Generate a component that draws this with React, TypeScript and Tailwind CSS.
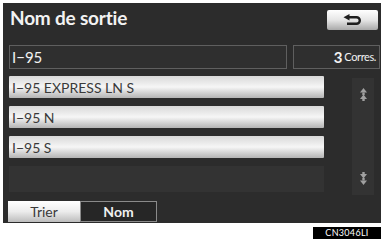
import React from 'react';

const rows = ['I−95 EXPRESS LN S', 'I−95 N', 'I−95 S'];

const BackIcon = () => (
  <svg width="22" height="13" viewBox="0 0 22 13" fill="none">
    <path d="M7 3.2h7.5a3.3 3.3 0 0 1 0 6.6H5" stroke="#1e1e1e" strokeWidth="2.4" />
    <path d="M1.5 3.2 7.5 0v6.4z" fill="#1e1e1e" />
  </svg>
);

const ArrowUp = () => (
  <svg width="7" height="13" viewBox="0 0 7 13">
    <path d="M3.5 0 7 4.5H0z" fill="#a0a0a0" />
    <rect x="2.3" y="4.5" width="2.4" height="2.5" fill="#a0a0a0" />
    <path d="M3.5 6.5 7 11H0z" fill="#a0a0a0" />
    <rect x="2.3" y="11" width="2.4" height="2" fill="#a0a0a0" />
  </svg>
);

const ArrowDown = () => (
  <svg width="7" height="13" viewBox="0 0 7 13">
    <rect x="2.3" y="0" width="2.4" height="2" fill="#a0a0a0" />
    <path d="M3.5 6.5 7 2H0z" fill="#a0a0a0" />
    <rect x="2.3" y="6" width="2.4" height="2.5" fill="#a0a0a0" />
    <path d="M3.5 13 7 8.5H0z" fill="#a0a0a0" />
  </svg>
);

export default function App() {
  return (
    <div className="w-[381px] h-[239px] bg-white overflow-hidden" style={{ fontFamily: 'Lato, "Open Sans", sans-serif' }}>
      <div className="mt-[3px] ml-[3px] w-[378px] h-[220px] bg-[#2c2c2c] flex flex-col">
        {/* Header */}
        <div className="flex items-start justify-between pt-[4px] pl-[7px] pr-[3px] h-[42px]">
          <div className="text-[19px] leading-[22px] font-bold text-[#f2f2f2] tracking-[-0.2px]">Nom de sortie</div>
          <div className="mt-[3px] w-[51px] h-[20px] rounded-[2px] bg-gradient-to-b from-[#ffffff] via-[#e6e6e6] to-[#a9a9a9] flex items-center justify-center">
            <BackIcon />
          </div>
        </div>

        {/* Search row */}
        <div className="flex pl-[6px] pr-[1px] gap-[6px] h-[24px]">
          <div className="w-[278px] border border-[#5f5f5f] bg-[#2f2f2f] flex items-center pl-[2px] text-[15px] text-[#f2f2f2]">I−95</div>
          <div className="flex-1 border border-[#5f5f5f] bg-[#2f2f2f] flex items-center justify-end pr-[3px] text-[#f2f2f2]">
            <span className="text-[15px] font-bold">3</span>
            <span className="text-[11px] ml-[2px] tracking-[-0.4px]">Corres.</span>
          </div>
        </div>

        {/* List */}
        <div className="flex mt-[7px] pl-[6px]">
          <div className="w-[315px] flex flex-col gap-[8px]">
            {rows.map((r) => (
              <div key={r} className="h-[22px] rounded-[1px] bg-gradient-to-b from-[#d8d8d8] via-[#f6f6f6] to-[#b4b4b4] flex items-center pl-[3px] text-[14px] text-[#3a3a3a]">
                {r}
              </div>
            ))}
            <div className="h-[26px] bg-[#333333]" />
          </div>
          <div className="ml-[28px] mt-[2px] w-[22px] h-[117px] bg-[#333333] flex flex-col items-center justify-between py-[10px]">
            <ArrowUp />
            <ArrowDown />
          </div>
        </div>

        {/* Tabs */}
        <div className="flex mt-[6px] pl-[5px]">
          <div className="w-[72px] h-[21px] bg-gradient-to-b from-[#ffffff] via-[#ececec] to-[#bdbdbd] flex items-center justify-center text-[14px] text-[#3a3a3a]">Trier</div>
          <div className="w-[77px] h-[21px] border border-[#8a8a8a] bg-[#262626] flex items-center justify-center text-[14px] font-bold text-[#f0f0f0]">Nom</div>
        </div>
      </div>
      <div className="flex justify-end mt-[4px]">
        <div className="w-[68px] h-[12px] bg-black text-white text-[9px] leading-[12px] text-center tracking-[0.3px]">CN3046LI</div>
      </div>
    </div>
  );
}
